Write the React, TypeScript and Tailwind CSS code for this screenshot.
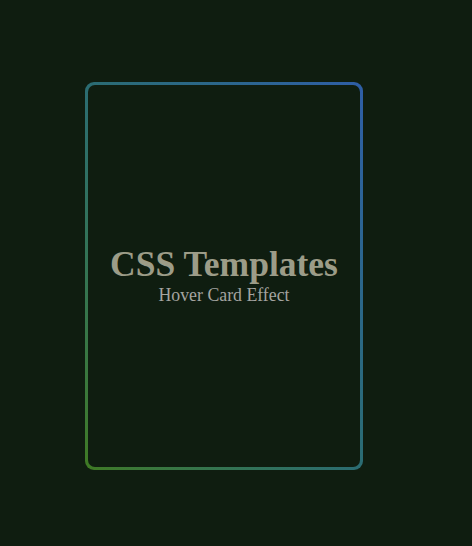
import React from 'react';

const App: React.FC = () => {
  return (
    <div
      className="w-[472px] h-[546px] bg-[#0f1d10] pt-[82px] pl-[85px]"
      style={{ fontFamily: '"Liberation Serif", "Times New Roman", serif' }}
    >
      {/* Gradient border card */}
      <div className="w-[278px] h-[388px] rounded-[9px] p-[3px] bg-gradient-to-tr from-[#3f7a22] via-[#2b6c72] to-[#2f5ea6]">
        <div className="w-full h-full rounded-[7px] bg-[#0f1d10] flex flex-col items-center justify-center">
          <h1 className="text-[35.5px] leading-none font-bold text-[#9c9c88]">CSS Templates</h1>
          <p className="mt-[4px] text-[17.8px] leading-none text-[#a4a4a0]">Hover Card Effect</p>
        </div>
      </div>
    </div>
  );
};

export default App;
